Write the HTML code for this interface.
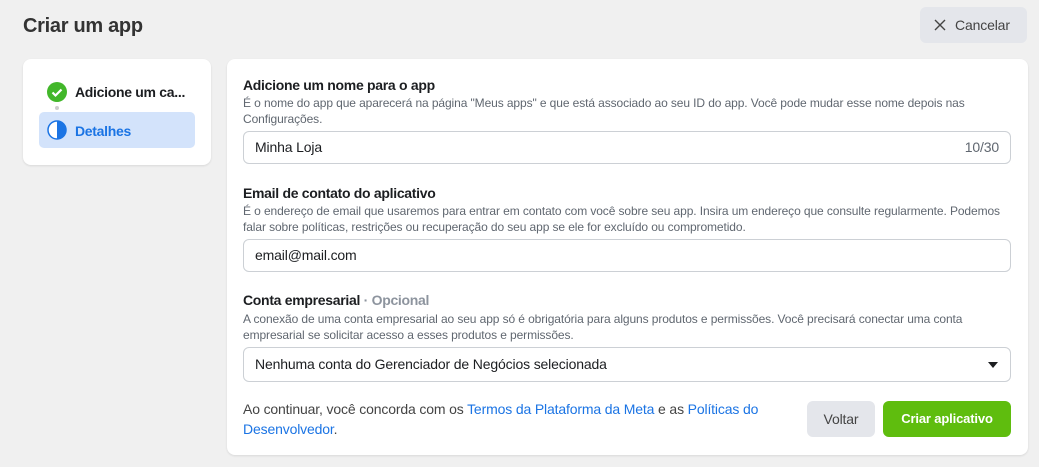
<!DOCTYPE html><html><head><style>
body{margin:0;width:1039px;height:467px;background:#f0f0f0;font-family:"Liberation Sans",sans-serif;position:relative;overflow:hidden;color:#1c1e21;letter-spacing:-0.15px}
.a{position:absolute}
h1{position:absolute;left:23px;top:15px;margin:0;font-size:20px;font-weight:bold;color:#333;letter-spacing:-0.3px}
.card{background:#fff;border-radius:8px;box-shadow:0 1px 2px rgba(0,0,0,.1)}
.lbl{font-size:14px;font-weight:bold;color:#1c1e21;letter-spacing:-0.3px}
.desc{font-size:12px;color:#606770;line-height:16px;letter-spacing:-0.1px}
.inp{border:1px solid #ccd0d5;border-radius:6px;height:33px;box-sizing:border-box;font-size:14px;line-height:31px;padding:0 11px;color:#1c1e21;background:#fff}
a{color:#1b74e4;text-decoration:none}
</style></head><body>
<h1>Criar um app</h1>
<div class="a" style="left:920px;top:7px;width:107px;height:36px;background:#e4e6eb;border-radius:6px;font-size:14px;color:#444;line-height:36px">
<svg class="a" style="left:13px;top:11px" width="14" height="14" viewBox="0 0 14 14"><path d="M2 2L12 12M12 2L2 12" stroke="#444" stroke-width="1.4"/></svg>
<span class="a" style="left:35px">Cancelar</span></div>
<div class="a card" style="left:23px;top:59px;width:188px;height:106px">
<svg class="a" style="left:24px;top:23px" width="20" height="20"><circle cx="10" cy="10" r="10" fill="#42b72a"/><path d="M5.5 10.5l3 3 6-6" stroke="#fff" stroke-width="2.2" fill="none"/></svg>
<span class="a lbl" style="left:52px;top:25px">Adicione um ca...</span>
<div class="a" style="left:32px;top:47px;width:4px;height:4px;border-radius:2px;background:#ccc"></div>
<div class="a" style="left:32px;top:54px;width:4px;height:4px;border-radius:2px;background:#ccc"></div>
<div class="a" style="left:16px;top:53px;width:156px;height:36px;background:#d3e3fb;border-radius:5px"></div>
<svg class="a" style="left:24px;top:61px" width="20" height="20"><circle cx="10" cy="10" r="9" fill="#fff" stroke="#1b74e4" stroke-width="1.5"/><path d="M10 1a9 9 0 0 1 0 18z" fill="#1b74e4"/></svg>
<span class="a lbl" style="left:52px;top:64px;color:#1b74e4">Detalhes</span>
</div>
<div class="a card" style="left:227px;top:59px;width:801px;height:396px">
<div class="a lbl" style="left:16px;top:18px">Adicione um nome para o app</div>
<div class="a desc" style="left:16px;top:36px;width:770px">É o nome do app que aparecerá na página "Meus apps" e que está associado ao seu ID do app. Você pode mudar esse nome depois nas Configurações.</div>
<div class="a inp" style="left:16px;top:72px;width:768px">Minha Loja<span style="float:right;color:#606770">10/30</span></div>
<div class="a lbl" style="left:16px;top:126px">Email de contato do aplicativo</div>
<div class="a desc" style="left:16px;top:144px;width:780px">É o endereço de email que usaremos para entrar em contato com você sobre seu app. Insira um endereço que consulte regularmente. Podemos falar sobre políticas, restrições ou recuperação do seu app se ele for excluído ou comprometido.</div>
<div class="a inp" style="left:16px;top:180px;width:768px">email@mail.com</div>
<div class="a lbl" style="left:16px;top:233px">Conta empresarial <span style="color:#8d949e">· Opcional</span></div>
<div class="a desc" style="left:16px;top:252px;width:770px">A conexão de uma conta empresarial ao seu app só é obrigatória para alguns produtos e permissões. Você precisará conectar uma conta empresarial se solicitar acesso a esses produtos e permissões.</div>
<div class="a inp" style="left:16px;top:288px;width:768px;height:35px;line-height:33px">Nenhuma conta do Gerenciador de Negócios selecionada
<svg class="a" style="right:12px;top:14px" width="10" height="6"><path d="M0 0h10L5 6z" fill="#1c1e21"/></svg></div>
<div class="a" style="left:16px;top:340px;width:540px;font-size:14px;line-height:20px;color:#444">Ao continuar, você concorda com os <a>Termos da Plataforma da Meta</a> e as <a>Políticas do Desenvolvedor</a>.</div>
<div class="a" style="left:580px;top:342px;width:68px;height:36px;background:#e4e6eb;border-radius:6px;font-size:14px;line-height:36px;text-align:center;color:#444">Voltar</div>
<div class="a" style="left:656px;top:342px;width:128px;height:36px;background:#5fbd0e;border-radius:6px;font-size:13px;font-weight:bold;line-height:36px;text-align:center;color:#fff">Criar aplicativo</div>
</div>
</body></html>
